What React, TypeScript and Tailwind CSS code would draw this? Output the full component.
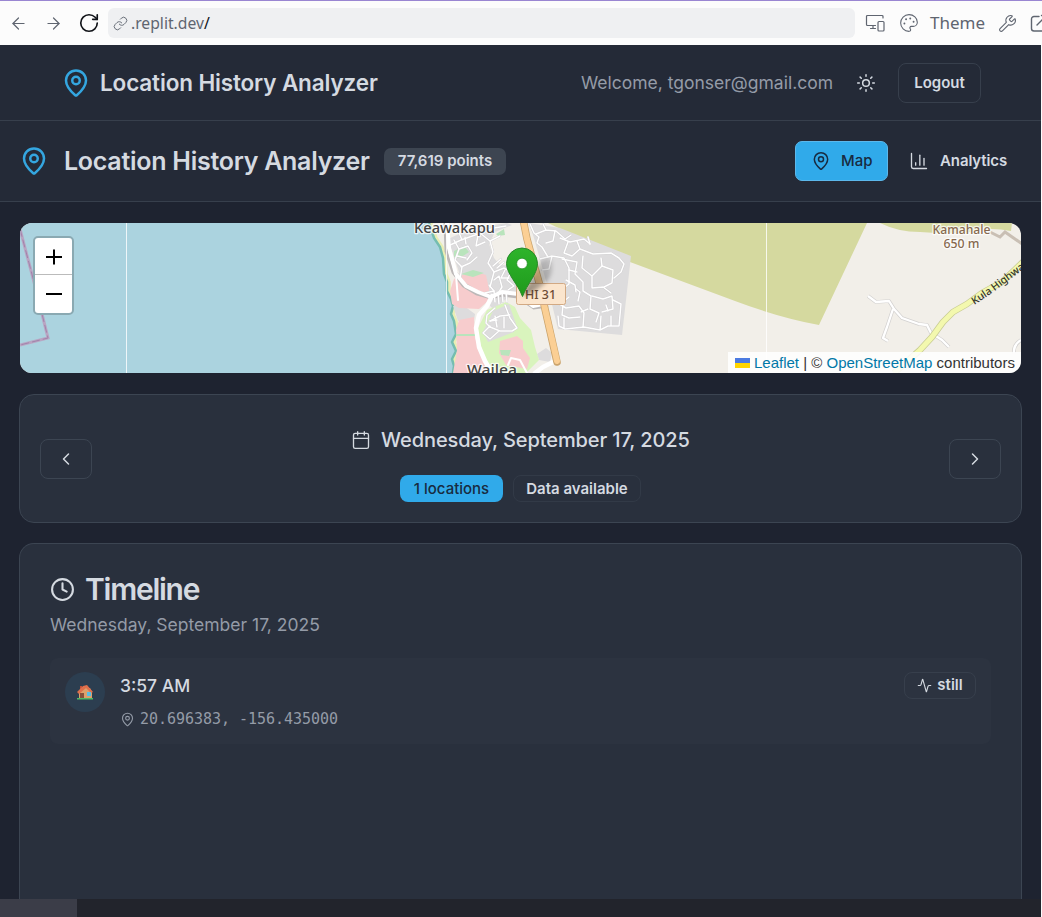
import React from "react";
import {
  Activity,
  ArrowLeft,
  ArrowRight,
  Calendar,
  ChartColumn,
  ChevronLeft,
  ChevronRight,
  Clock,
  Link,
  MapPin,
  Palette,
  RotateCw,
  Sun,
  Wrench,
} from "lucide-react";

function DevicesIcon() {
  return (
    <svg width="20" height="20" viewBox="0 0 20 20" fill="none" stroke="#5f6570" strokeWidth="1.2" strokeLinecap="round" strokeLinejoin="round">
      <path d="M18 5V3.500a1 1 0 0 0-1-1H2.500a1 1 0 0 0-1 1v8a1 1 0 0 0 1 1h8M8 12.500v3M5.500 15.500h5" />
      <rect x="13" y="8.500" width="6" height="9.500" rx="1" />
    </svg>
  );
}

function BrowserBar() {
  return (
    <div className="flex h-[45px] shrink-0 items-center overflow-hidden border-t border-[#9a86d2] bg-[#fcfcfc] text-[#5f6570]">
      <ArrowLeft size={19} strokeWidth={1.5} className="ml-[9px] shrink-0" />
      <ArrowRight size={19} strokeWidth={1.5} className="ml-4 shrink-0" />
      <RotateCw size={22} strokeWidth={1.8} className="ml-[15px] shrink-0 text-[#111318]" />
      <div className="ml-2 flex h-[30px] w-[747px] shrink-0 items-center rounded-md bg-[#eff0f2]">
        <Link size={15} strokeWidth={1.5} className="ml-[5px]" />
        <span className="mt-px ml-[3px] font-['Noto_Sans'] text-[15.7px]">
          .replit.dev<span className="text-[#111318]">/</span>
        </span>
      </div>
      <div className="ml-[10px] shrink-0"><DevicesIcon /></div>
      <Palette size={20} strokeWidth={1.3} className="ml-[14px] shrink-0" />
      <span className="ml-[11px] w-[54px] shrink-0 font-['Noto_Sans'] text-[17px]">Theme</span>
      <Wrench size={19} strokeWidth={1.4} className="ml-[14px] shrink-0" />
      <svg className="ml-[13px] shrink-0" width="20" height="20" viewBox="0 0 20 20" fill="none" stroke="#5f6570" strokeWidth="1.4" strokeLinecap="round">
        <path d="M9 3.500H4A2.500 2.500 0 0 0 1.500 6v9.500A2.500 2.500 0 0 0 4 18h9.500a2.500 2.500 0 0 0 2.500-2.500V10M7 12l9-9M11.500 2.500H17V8" />
      </svg>
    </div>
  );
}

function TopHeader() {
  return (
    <header className="flex h-[76px] shrink-0 items-center border-b border-[#373f4c] bg-[#242a37] pr-[60px] pl-[61px]">
      <MapPin size={30} className="text-[#34a6e0]" />
      <h1 className="mt-px ml-[9px] w-[278px] text-[22.5px] font-semibold tracking-[-0.14px] whitespace-nowrap">Location History Analyzer</h1>
      <span className="mt-px ml-auto text-[17.5px] whitespace-nowrap text-[#949ba7]">Welcome, tgonser@gmail.com</span>
      <Sun size={20} strokeWidth={1.8} className="ml-[23px]" />
      <button className="ml-[22px] h-[40px] w-[83px] rounded-[8px] border border-[#373f4c] pt-px text-[15px] font-semibold">Logout</button>
    </header>
  );
}

function SubHeader() {
  return (
    <div className="flex h-[81px] shrink-0 items-center border-b border-[#373f4c] bg-[#242a37] pr-[20px] pl-[19px]">
      <MapPin size={30} className="text-[#34a6e0]" />
      <h2 className="mt-[2px] ml-[15px] w-[305px] text-[25px] font-semibold tracking-[-0.27px] whitespace-nowrap">Location History Analyzer</h2>
      <span className="ml-[15px] flex h-[27px] w-[122px] items-center justify-center rounded-[7px] bg-[#3d4551] text-[15px] font-semibold">77,619 points</span>
      <button className="ml-auto flex h-[40px] w-[93px] items-center rounded-[7px] border border-[#5cb8eb] bg-[#30aaea] pl-[15px] text-[15px] font-medium text-[#182b40]">
        <MapPin size={20} strokeWidth={1.8} />
        <span className="ml-[10px]">Map</span>
      </button>
      <button className="ml-[5px] flex h-[40px] w-[128px] items-center pl-[16px] text-[15px] font-semibold">
        <ChartColumn size={20} strokeWidth={1.6} />
        <span className="ml-[11px] tracking-[-0.1px]">Analytics</span>
      </button>
    </div>
  );
}

const coast =
  "M429 223 434 238 440 247 443 258 444 274 447 282 447 291 451 299 453 306 451 314 454 321 456 334 452 342 456 351 452 359 454 366 453 373";

const streetsEast = [
  "M530 224 534 233 539 237 537 243 542 247 548 257",
  "M536 234 546 230 556 231 565 239 571 235M546 230 543 224",
  "M555 231 553 241 546 243M560 238 570 242 584 239 590 244",
  "M568 242 564 253 572 256 580 249 593 254 611 253 619 258 624 264 621 272 614 278M590 244 588 237M580 249 577 241",
  "M540 259 552 256 564 258 569 268 569 284 559 292M552 256 549 269 542 270",
  "M562 259 577 262 575 274 583 282 583 291 591 296 590 309 599 313 596 322",
  "M569 270 577 272M566 280 575 285 576 292",
  "M583 256 582 268 592 276 602 266 601 258M592 276 592 288 603 287 611 293",
  "M602 266 613 270 612 283 604 287M592 296 603 299 612 296 613 309 602 312",
  "M553 296 563 302 569 297M556 302 566 308 579 306 584 313 583 327M563 305 562 315 569 318 580 317",
  "M558 316 559 326 565 329 584 327 600 330 608 326 619 326 621 304 613 300M564 318 564 328M600 330 601 316M611 326 611 316",
  "M578 301 580 292 576 289M588 309 581 312M606 305 608 311",
];
const streetsWest = [
  "M448 246 461 240 478 234 494 228 506 226M462 240 458 230M478 235 476 246 485 242",
  "M454 240 459 249 455 260 462 267 460 279M459 249 468 246 472 253 467 260",
  "M480 233 490 241 493 252 488 263 494 272 490 287M490 241 500 236",
  "M457 256 466 258M461 267 470 263 477 257M466 244 465 237",
  "M494 272 504 268 511 272 507 280 514 286 508 290M494 280 499 276 502 287 499 292",
  "M493 266 501 259M497 268 504 262M489 285 494 291M505 270 501 278 509 278M512 273 516 280",
  "M485 293 494 291 495 302M498 292 499 304M502 292 503 302M506 291 507 302",
  "M505 305 510 318 517 328 512 331 499 331 490 339 483 333 490 326M510 315 500 316 490 321M495 316 497 327M504 316 504 328M490 327 500 331",
  "M495 308 487 315 486 323 490 327M490 321 497 320",
];

function Streets({ paths, width }: { paths: string[]; width: number }) {
  return (
    <g fill="none" strokeLinejoin="round" strokeLinecap="round">
      {paths.map((d) => (
        <path key={"c" + d} d={d} stroke="#cdcbcd" strokeWidth={width + 0.7} />
      ))}
      {paths.map((d) => (
        <path key={d} d={d} stroke="#fff" strokeWidth={width} />
      ))}
    </g>
  );
}

function MapDrawing() {
  return (
    <svg className="block" width="1001" height="150" viewBox="20 223 1001 150">
      <defs>
        <linearGradient id="pinFill" x1="0" y1="0" x2="0" y2="1">
          <stop offset="0" stopColor="#2eb42b" />
          <stop offset="1" stopColor="#1f9a1c" />
        </linearGradient>
        <linearGradient id="pinShadow" x1="0" y1="1" x2="1" y2="0">
          <stop offset="0" stopColor="#000" stopOpacity=".45" />
          <stop offset="1" stopColor="#000" stopOpacity="0.12" />
        </linearGradient>
        <filter id="soft"><feGaussianBlur stdDeviation="2.2" /></filter>
        <path id="kula" d="M974 305 Q987 297 996 290 T1024 269" />
      </defs>
      <rect x="20" y="223" width="1001" height="150" fill="#f2efe9" />
      <path d={coast + "L20 373 20 223Z"} fill="#abd3df" />
      <path d={coast} fill="none" stroke="#e9eeb4" strokeWidth="3.5" transform="translate(2 0)" />
      <path d={coast} fill="none" stroke="#75bdb0" strokeWidth="2.5" />
      <path d="M548 223H867L819 325Q780 318 735 301L630 262Z" fill="#d5d99f" />
      <path d="M880 223H1012L1011 231Q990 227 975 231T920 232Q898 232 880 223Z" fill="#d5d99f" />
      <path d="M448 239 470 229 507 223 512 225 495 232 489 244 494 258 500 265 520 266 519 290 508 297 494 310 477 292 461 278Z" fill="#dddcdd" />
      <path d="M529 223 560 228 631 256 626 300 622 335 558 329 548 288 534 238Z" fill="#dddcdd" />
      <path d="M453 306 460 303 475 314 474 320 458 321ZM537 354 546 348 552 353 550 362 539 360Z" fill="#dddcdd" />
      <path d="M459 276Q474 270 486 275L489 289 489 300 479 309 459 308 452 304 450 291 454 279Z" fill="#f7cccd" />
      <path d="M459 320 474 317 475 338 480 351 486 369 477 373 453 373 457 350 456 330Z" fill="#f7cccd" />
      <path d="M487 310 506 302 515 307 520 318 531 330 535 347 539 360 526 373 491 373 482 350 477 330Z" fill="#d9f4bd" />
      <path d="M493 311 509 304 516 324 514 332 488 342 483 332Z" fill="#dddcdd" />
      <path d="M500 341 517 336 523 341 523 348 530 358 527 369 506 365 499 353Z" fill="#f7cccd" />
      <path d="M454 251 464 246 469 252 460 258 454 257ZM461 274 473 270 484 273 473 277ZM496 234 504 229 505 235 498 236ZM500 350H511L509 356 501 355ZM456 334H475V336H456Z" fill="#b9e4bc" />
      <path d="M446 223 447 251 454 272 464 285 477 293 491 297 502 294 518 296 534 307 548 305" stroke="#bcb8b8" strokeWidth="5" fill="none" />
      <Streets paths={streetsWest} width={1.5} />
      <Streets paths={streetsEast} width={1.5} />
      <g fill="none" stroke="#fff" strokeLinecap="round" strokeLinejoin="round">
        <path d="M448 223 449 251 456 275 458 300" strokeWidth="2" />
        <path d="M447 223 449 248 456 274 466 286 478 292 491 297 502 292 518 294 533 306 548 303" strokeWidth="4" />
        <path d="M492 296 487 306 479 315 476 328 479 347 485 361 492 373M555 361 543 367 535 373" strokeWidth="4.5" />
        <path d="M508 365 511 358 520 360 527 373" strokeWidth="2" />
      </g>
      <path d="M523 219 527 239 533 261 540 286 545 309 557 362" fill="none" stroke="#cba46c" strokeWidth="7.500" strokeLinecap="round" />
      <path d="M523 219 527 239 533 261 540 286 545 309 557 361" fill="none" stroke="#fbcf94" strokeWidth="6" strokeLinecap="round" />
      <path d="M20 229 34 282 48 338 20 345" fill="none" stroke="#b9a5c2" strokeWidth="3" />
      <path d="M20 229 34 282 48 338 20 345" fill="none" stroke="#a183ab" strokeWidth="1" strokeDasharray="8 3" />
      <path d="M868 296 876 302 889 301 894 309 902 318 919 324 927 325 931 333 942 340 949 347M893 309 887 327 883 338 888 341M1021 340Q1013 345 1014 353" fill="none" stroke="#d3d1d0" strokeWidth="3.700" strokeLinejoin="round" />
      <path d="M868 296 876 302 889 301 894 309 902 318 919 324 927 325 931 333 942 340 949 347M893 309 887 327 883 338 888 341M1021 340Q1013 345 1014 353" fill="none" stroke="#fff" strokeWidth="2.300" strokeLinejoin="round" />
      <path d="M894 373 920 350 932 337 943 322 953 312 967 304 982 293 1002 282 1024 261" fill="none" stroke="#c8cc95" strokeWidth="6.500" strokeLinejoin="round" />
      <path d="M894 373 920 350 932 337 943 322 953 312 967 304 982 293 1002 282 1024 261" fill="none" stroke="#f3f8ae" strokeWidth="5" strokeLinejoin="round" />
      <path d="M990 232 1000 237 1005 232 1025 246" fill="none" stroke="#c9bfb4" strokeWidth="3" />
      <path d="M126.500 223V373M446.500 223V373M766.500 223V373" stroke="#fff" strokeOpacity=".8" />
      <g fontFamily="Noto Sans, sans-serif" stroke="#fff" strokeOpacity=".75" paintOrder="stroke" strokeWidth="2.500" strokeLinejoin="round">
        <text x="414" y="233" fontSize="14.500" fill="#444" fontWeight="500" textLength="81" lengthAdjust="spacingAndGlyphs">Keawakapu</text>
        <text x="467" y="375" fontSize="14.500" fill="#444" fontWeight="500" textLength="50" lengthAdjust="spacingAndGlyphs">Wailea</text>
        <g fill="#87694f" fontSize="12" fontWeight="500" textAnchor="middle">
          <text x="961.500" y="234" textLength="58" lengthAdjust="spacingAndGlyphs">Kamahale</text>
          <text x="961.500" y="248" textLength="36" lengthAdjust="spacingAndGlyphs">650 m</text>
        </g>
        <text fontSize="10.500" fontWeight="500" fill="#35352b" strokeWidth="0"><textPath href="#kula">Kula Highway</textPath></text>
      </g>
      <rect x="516.500" y="283.500" width="49" height="21" rx="2" fill="#fbe5cd" stroke="#d2a983" />
      <text x="525" y="299" fontFamily="Noto Sans, sans-serif" fontSize="12" fontWeight="500" fill="#6d4c35" textLength="31" lengthAdjust="spacingAndGlyphs">HI 31</text>
      <path d="M522 296 540 262Q553 252 552 269T522 296Z" fill="url(#pinShadow)" filter="url(#soft)" />
      <path d="M522.500 296.500C518 284 506.500 274 506.500 263.500a15.500 15.500 0 0 1 31 0C537.500 274 527 284 522.500 296.500Z" fill="url(#pinFill)" stroke="#27892a" strokeWidth="1" />
      <circle cx="522" cy="263.500" r="5.300" fill="#fff" stroke="#218b22" strokeWidth=".7" />
    </svg>
  );
}

function MapPanel() {
  return (
    <section className="relative mx-auto h-[150px] w-[1001px] shrink-0 overflow-hidden rounded-[12px]">
      <MapDrawing />
      <div className="absolute top-[13px] left-[13px] flex h-[79px] w-[41px] flex-col overflow-hidden rounded-[5px] border-2 border-[#8aa9b2] bg-white text-black">
        <button className="flex h-[37px] items-center justify-center border-b border-[#bbb] pt-px" aria-label="Zoom in">
          <svg width="16" height="16" viewBox="0 0 16 16" stroke="#000" strokeWidth="2"><path d="M0 8H16M8 .5V15.500" /></svg>
        </button>
        <button className="flex h-[38px] items-center justify-center" aria-label="Zoom out">
          <svg width="16" height="16" viewBox="0 0 16 16" stroke="#000" strokeWidth="2"><path d="M0 8H16" /></svg>
        </button>
      </div>
      <div className="absolute right-0 bottom-0 flex h-[21px] w-[293px] items-center bg-white/85 pt-px pl-[7px] font-['Liberation_Sans'] text-[15px] whitespace-pre text-[#333]">
        <svg width="15" height="10" viewBox="0 0 15 10" className="mr-1"><path fill="#4c7be1" d="M0 0H15V5H0z" /><path fill="#ffd500" d="M0 5H15V10H0z" /></svg>
        <span className="text-[#0078a8]">Leaflet</span>
        <span> | © </span>
        <span className="text-[#0078a8]">OpenStreetMap</span>
        <span> contributors</span>
      </div>
    </section>
  );
}

function DateNavigator() {
  const button = "flex h-[40px] w-[52px] items-center justify-center rounded-[8px] border border-[#3c4552]";
  return (
    <section className="mx-auto mt-[21px] flex h-[129px] w-[1003px] shrink-0 items-center justify-between rounded-[15px] border border-[#3c4552] bg-[#29303d] px-[20px]">
      <button className={button} aria-label="Previous day"><ChevronLeft size={20} strokeWidth={1.8} /></button>
      <div className="flex flex-col items-center pt-[10px]">
        <div className="flex h-[30px] items-center">
          <Calendar size={20} strokeWidth={1.6} />
          <h3 className="ml-[10px] text-[20px] font-medium tracking-[-0.1px] whitespace-nowrap">Wednesday, September 17, 2025</h3>
        </div>
        <div className="mt-[20px] flex gap-[10px] text-[15px] font-semibold">
          <span className="flex h-[27px] w-[103px] items-center justify-center rounded-[8px] bg-[#30aaea] pt-px font-medium text-[#182b40]">1 locations</span>
          <span className="flex h-[27px] w-[128px] items-center justify-center rounded-[8px] border border-[#323a47] pt-px">Data available</span>
        </div>
      </div>
      <button className={button} aria-label="Next day"><ChevronRight size={20} strokeWidth={1.8} /></button>
    </section>
  );
}

function House() {
  return (
    <svg width="16" height="16" viewBox="0 0 16 16">
      <path d="M3 2H5V6H3z" fill="#bf513b" />
      <path d="M3 7 6 4 13 4 15 8V14H2V8z" fill="#dda16c" />
      <path d="M0 8 6 2 10 1 16 8 14 9 9 4 2 10z" fill="#df704c" />
      <path d="M3 9H7V14H3z" fill="#88513c" />
      <path d="M10 8H14V12H10z" fill="#58bfe3" />
      <path d="M0 14H16V15.500H0z" fill="#50b967" />
    </svg>
  );
}

function Timeline() {
  return (
    <section className="mx-auto mt-[20px] flex w-[1003px] flex-1 flex-col rounded-t-[15px] border border-b-0 border-[#3c4552] bg-[#29303d] px-[30px] pt-[30px]">
      <div className="flex h-[30px] items-center">
        <Clock size={25} strokeWidth={2} />
        <h2 className="ml-[10px] text-[30px] font-semibold tracking-[-1.25px]">Timeline</h2>
      </div>
      <p className="mt-[8px] h-[24px] text-[17.5px] leading-[25px] text-[#949ba7]">Wednesday, September 17, 2025</p>
      <div className="mt-[22px] flex h-[86px] items-start rounded-[8px] bg-[#2c3340] px-[15px] pt-[14px]">
        <div className="flex size-[40px] items-center justify-center rounded-full bg-[#2c3e50]"><House /></div>
        <div className="ml-[15px]">
          <p className="h-[28px] text-[17.5px] leading-[27px] font-medium">3:57 AM</p>
          <div className="mt-[7px] flex h-[25px] items-center text-[#949ba7]">
            <MapPin size={15} strokeWidth={1.8} />
            <span className="ml-[5px] font-['DejaVu_Sans_Mono'] text-[15px] tracking-[-0.03px]">20.696383, -156.435000</span>
          </div>
        </div>
        <span className="ml-auto flex h-[27px] w-[72px] items-center justify-center rounded-[8px] border border-[#373f4c] text-[15px] font-semibold">
          <Activity size={15} strokeWidth={1.8} className="mr-[5px]" />still
        </span>
      </div>
    </section>
  );
}

export default function App() {
  return (
    <div className="flex h-[917px] w-[1042px] flex-col overflow-hidden bg-[#fcfcfc] font-['Inter',sans-serif] text-[#d5dae1]">
      <BrowserBar />
      <div className="flex min-h-0 w-[1041px] flex-1 flex-col bg-[#1e2330]">
        <TopHeader />
        <SubHeader />
        <main className="flex min-h-0 flex-1 flex-col pt-[21px]">
          <MapPanel />
          <DateNavigator />
          <Timeline />
        </main>
        <div className="h-[18px] shrink-0 bg-[#22242c]"><div className="h-full w-[77px] bg-[#3b3d48]" /></div>
      </div>
    </div>
  );
}
